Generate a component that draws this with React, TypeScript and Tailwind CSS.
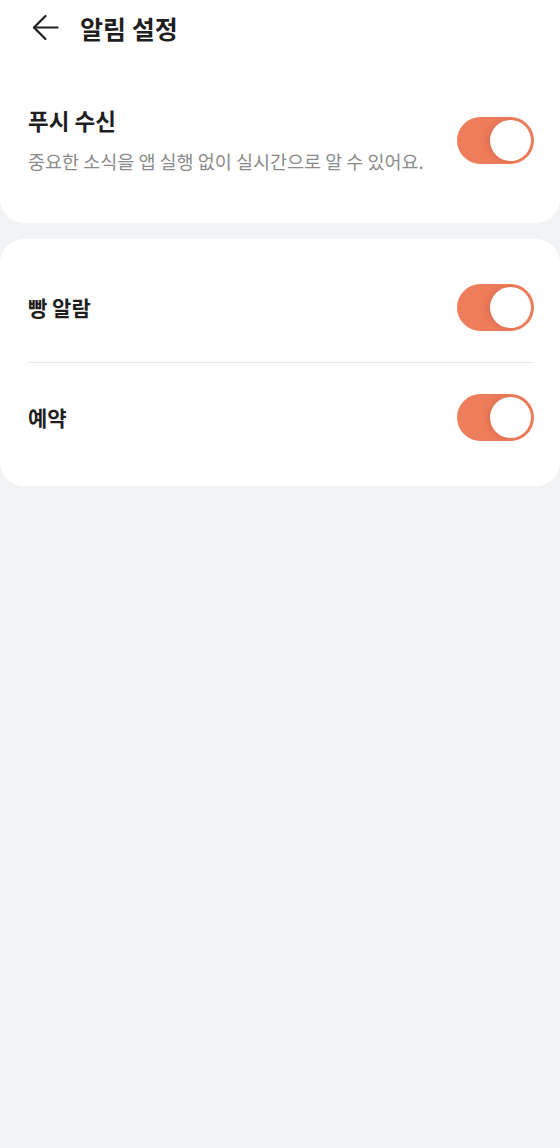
import React, { useState } from 'react';

const font = { fontFamily: '"Noto Sans CJK KR", "Noto Sans", sans-serif' };

function Toggle({ on, onChange }: { on: boolean; onChange: () => void }) {
  return (
    <button
      type="button"
      onClick={onChange}
      className={`flex h-[47px] w-[77px] shrink-0 items-center rounded-full p-[3px] ${on ? 'bg-[#ed7d5b]' : 'bg-[#d9d9d9]'}`}
    >
      <span
        className={`h-[41px] w-[41px] rounded-full bg-white shadow-[-3px_0_6px_rgba(150,50,20,0.18)] ${on ? 'ml-auto' : ''}`}
      />
    </button>
  );
}

export default function App() {
  const [push, setPush] = useState(true);
  const [bread, setBread] = useState(true);
  const [reserve, setReserve] = useState(true);

  return (
    <div className="min-h-[1148px] w-full bg-[#f2f3f5]" style={font}>
      {/* 상단 + 푸시 수신 */}
      <div className="rounded-b-[24px] bg-white">
        <div className="flex h-14 items-center">
          <button type="button" className="ml-[32px] flex h-[28px] w-[28px] items-center justify-center">
            <svg width="28" height="28" viewBox="0 0 28 28" fill="none" stroke="#1f1f1f" strokeWidth="2.2" strokeLinecap="round" strokeLinejoin="round">
              <path d="M13.5 2 L2 13.5 L13.5 25" />
              <path d="M2 13.5 H25.5" />
            </svg>
          </button>
          <h1 className="ml-[20px] text-[25px] font-bold leading-none text-[#1f1f1f]">알림 설정</h1>
        </div>

        <div className="flex items-center pb-[49px] pl-[28px] pr-[26px] pt-[50px]">
          <div className="flex-1">
            <p className="text-[22.5px] font-bold leading-[29px] text-[#1f1f1f]">푸시 수신</p>
            <p className="mt-[13px] text-[18.5px] leading-[26px] text-[#8b8b8b]">
              중요한 소식을 앱 실행 없이 실시간으로 알 수 있어요.
            </p>
          </div>
          <Toggle on={push} onChange={() => setPush(!push)} />
        </div>
      </div>

      {/* 알림 항목 */}
      <div className="mt-4 rounded-[24px] bg-white py-[14px] pl-[28px] pr-[26px]">
        <div className="flex items-center py-[31px]">
          <p className="flex-1 text-[21px] font-bold text-[#1f1f1f]">빵 알람</p>
          <Toggle on={bread} onChange={() => setBread(!bread)} />
        </div>
        <div className="h-px bg-[#e8e8ea]" />
        <div className="flex items-center py-[31px]">
          <p className="flex-1 text-[21px] font-bold text-[#1f1f1f]">예약</p>
          <Toggle on={reserve} onChange={() => setReserve(!reserve)} />
        </div>
      </div>
    </div>
  );
}
